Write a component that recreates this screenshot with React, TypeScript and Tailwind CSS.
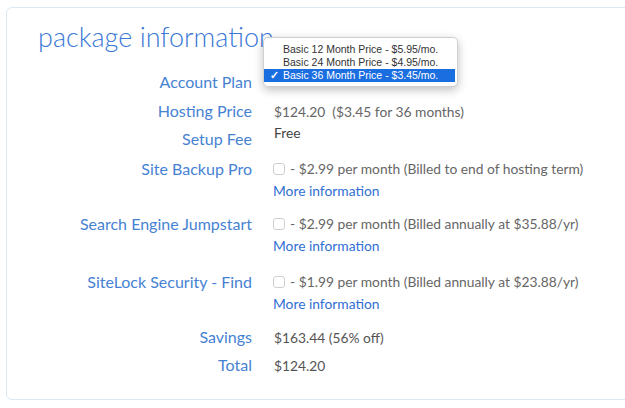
import React from "react";

const Label = ({ children }: { children: React.ReactNode }) => (
  <div className="w-[245px] shrink-0 text-right text-[16px] leading-[22px] text-[#4682d3]">{children}</div>
);

const Check = () => (
  <span className="inline-block w-[12px] h-[12px] rounded-[3px] border border-[#cfcfcf] bg-white mr-[5px] align-[-1px]" />
);

const Addon = ({ label, price, h }: { label: string; price: string; h: string }) => (
  <div className={`flex items-start ${h}`}>
    <Label>{label}</Label>
    <div className="ml-[21px] text-[13.8px] leading-[22px] text-[#666]">
      <div>
        <Check />- {price}
      </div>
      <div className="text-[#2f6fd3] leading-[21px]">More information</div>
    </div>
  </div>
);

export default function App() {
  return (
    <div className="w-[625px] h-[408px] overflow-hidden bg-white pl-[6px] pt-[7px]" style={{ fontFamily: "Lato, 'Open Sans', sans-serif" }}>
      <div className="relative w-[640px] h-[393px] border border-[#dde8f5] rounded-[6px]">
        <h1 className="pl-[31px] pt-[11px] text-[27px] leading-[36px] font-light text-[#3a78d7]">package information</h1>
        <div className="mt-[16px]">
          <div className="flex items-start h-[29px]">
            <Label>Account Plan</Label>
          </div>
          <div className="flex items-baseline h-[28px]">
            <Label>Hosting Price</Label>
            <div className="ml-[22px] text-[13.8px] leading-[22px] text-[#666] whitespace-pre">$124.20  ($3.45 for 36 months)</div>
          </div>
          <div className="flex items-start h-[30px]">
            <Label>Setup Fee</Label>
            <div className="ml-[22px] -mt-[6px] text-[13.8px] leading-[22px] text-[#444]">Free</div>
          </div>
          <Addon label="Site Backup Pro" price="$2.99 per month (Billed to end of hosting term)" h="h-[55px]" />
          <Addon label="Search Engine Jumpstart" price="$2.99 per month (Billed annually at $35.88/yr)" h="h-[58px]" />
          <Addon label="SiteLock Security - Find" price="$1.99 per month (Billed annually at $23.88/yr)" h="h-[55px]" />
          <div className="flex items-baseline h-[28px]">
            <Label>Savings</Label>
            <div className="ml-[22px] text-[13.8px] leading-[22px] text-[#555]">$163.44 (56% off)</div>
          </div>
          <div className="flex items-baseline h-[28px]">
            <Label>Total</Label>
            <div className="ml-[22px] text-[13.8px] leading-[22px] text-[#555]">$124.20</div>
          </div>
        </div>

        <div
          className="absolute left-[256px] top-[29px] w-[195px] pt-[5px] pb-[4px] bg-white border border-[#d0d0d0] rounded-[5px] shadow-[0_3px_10px_rgba(0,0,0,0.25)] text-[10.5px] leading-[13px] text-[#333]"
          style={{ fontFamily: "'Liberation Sans', Arial, sans-serif" }}
        >
          <div className="pl-[19px] h-[13px]">Basic 12 Month Price - $5.95/mo.</div>
          <div className="pl-[19px] h-[13px]">Basic 24 Month Price - $4.95/mo.</div>
          <div className="relative pl-[19px] h-[13px] bg-[#1b6ee0] text-white mr-[2px]">
            <span className="absolute left-[6px] top-0 font-bold">✓</span>
            Basic 36 Month Price - $3.45/mo.
          </div>
        </div>
      </div>
    </div>
  );
}
